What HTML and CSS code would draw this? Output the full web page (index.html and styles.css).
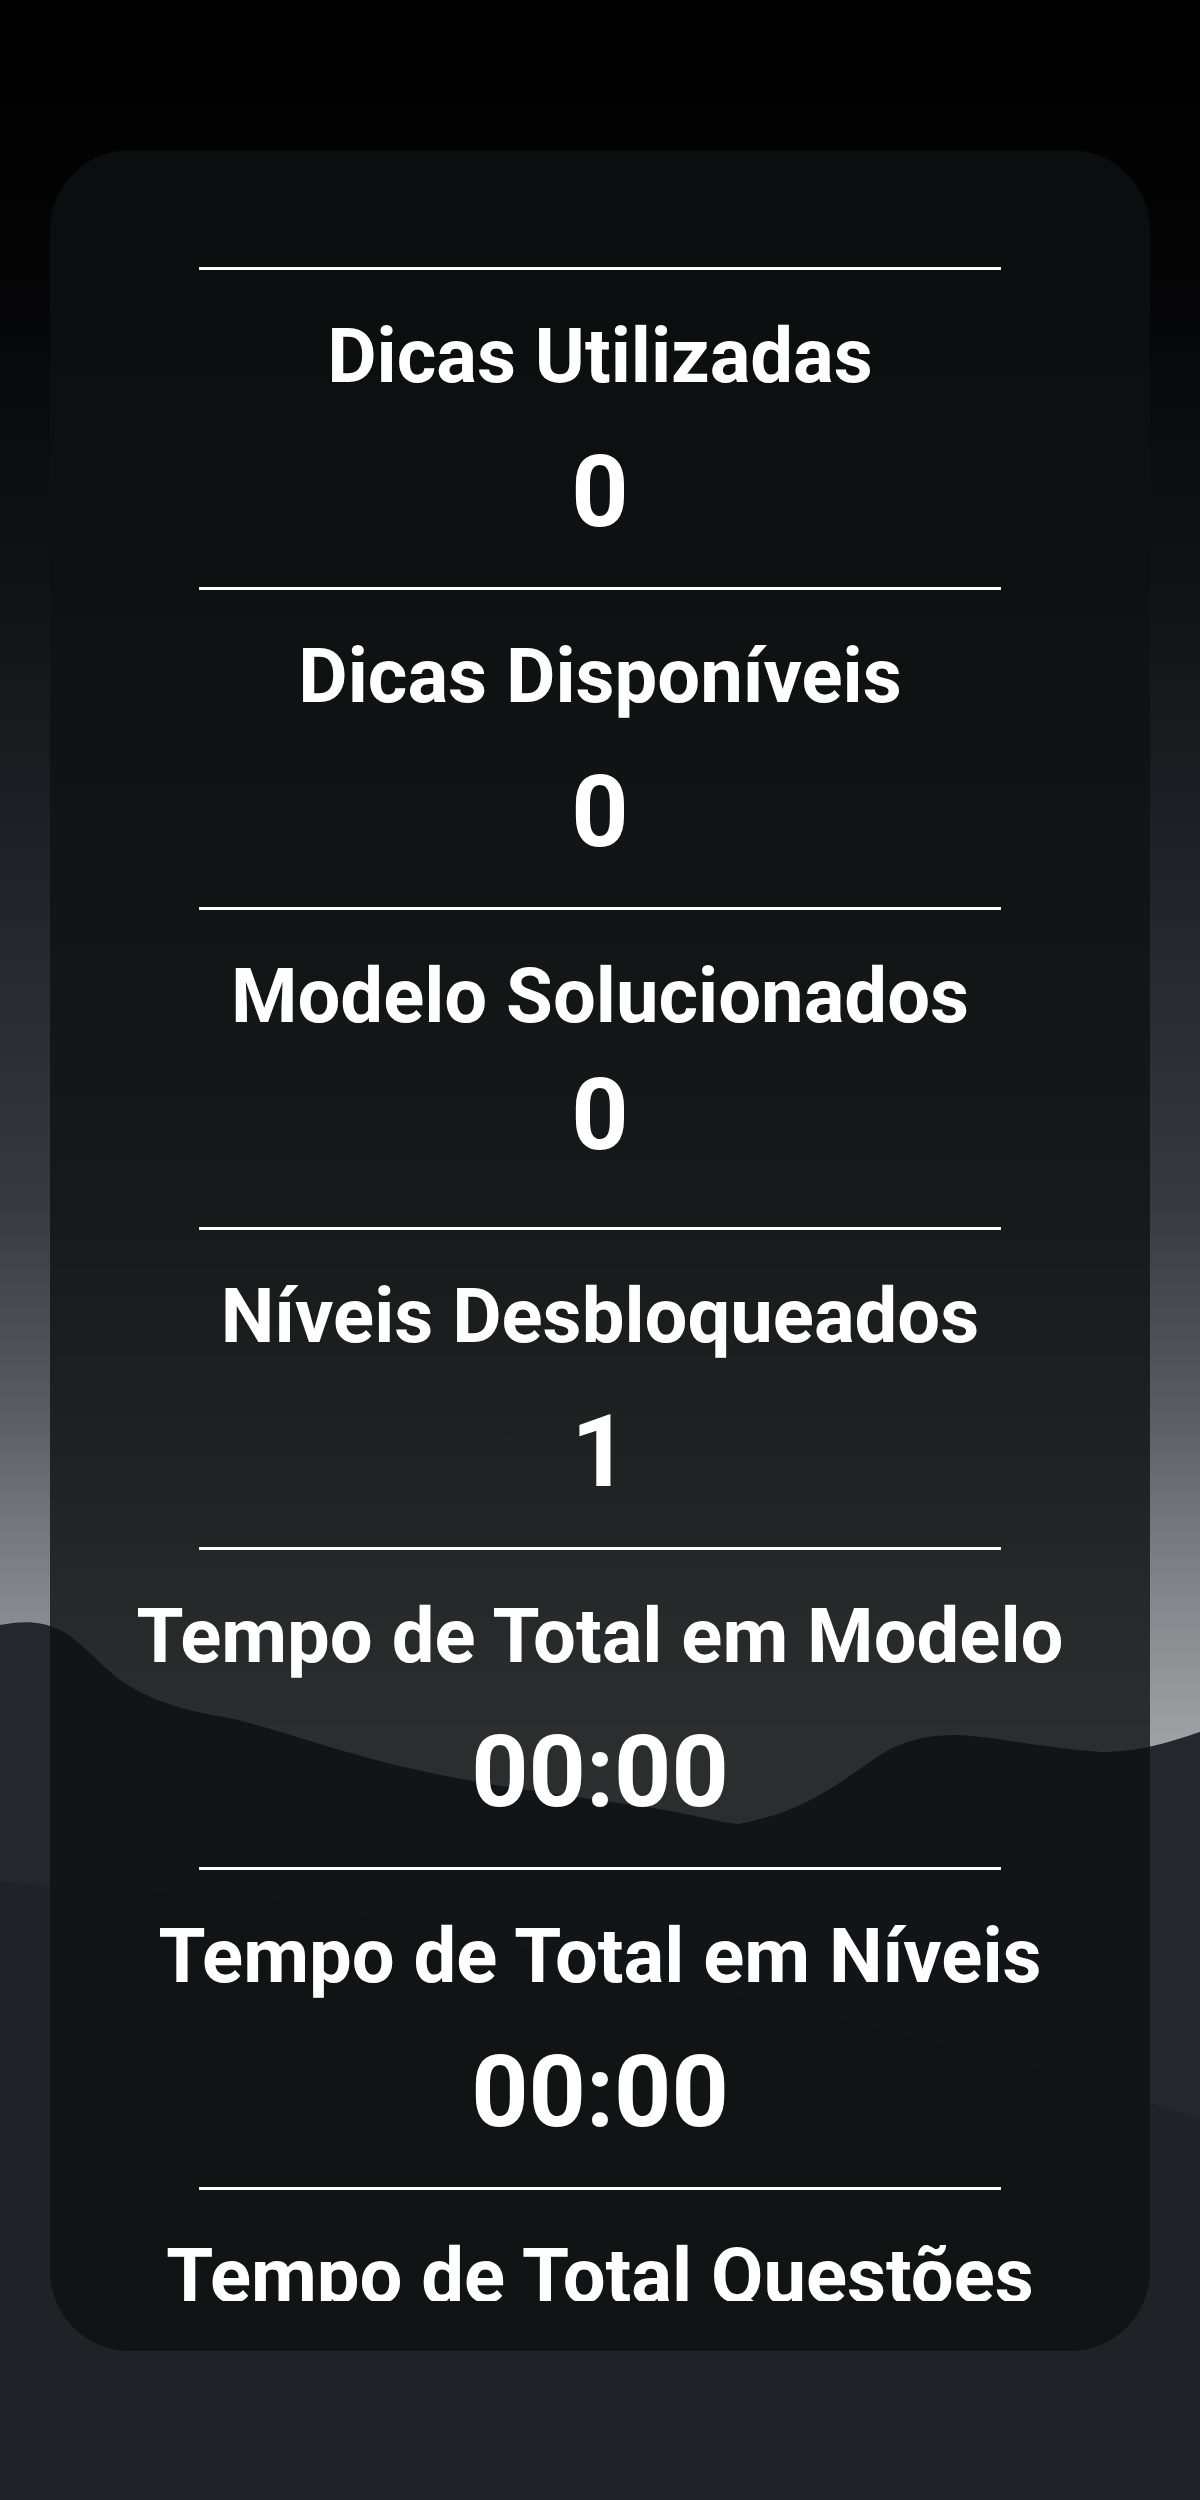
FILE: index.html
```html
<!DOCTYPE html>
<html lang="pt-BR">
<head>
    <meta charset="UTF-8">
    <meta name="viewport" content="width=device-width, initial-scale=1.0">
    <title>Estatísticas</title>
    <link rel="stylesheet" href="styles.css">
</head>
<body>
    <!-- paisagem de fundo -->
    <svg class="backdrop" viewBox="0 0 1200 2500" preserveAspectRatio="none" aria-hidden="true">
        <defs>
            <linearGradient id="sky" x1="0" y1="0" x2="0" y2="1">
                <stop offset="0" stop-color="#000000"/>
                <stop offset="0.1" stop-color="#040405"/>
                <stop offset="0.24" stop-color="#111316"/>
                <stop offset="0.32" stop-color="#1c1e23"/>
                <stop offset="0.4" stop-color="#282b30"/>
                <stop offset="0.48" stop-color="#36393e"/>
                <stop offset="0.56" stop-color="#575b5f"/>
                <stop offset="0.64" stop-color="#84878b"/>
                <stop offset="0.7" stop-color="#a0a2a5"/>
                <stop offset="1" stop-color="#a0a2a5"/>
            </linearGradient>
        </defs>
        <rect x="0" y="0" width="1200" height="2500" fill="url(#sky)"/>
        <path fill="#24272e" d="M0 1625 C20 1621 40 1620 60 1630 C80 1640 95 1660 120 1680 C150 1700 180 1710 230 1718 C280 1730 320 1746 400 1766 C480 1785 560 1795 640 1806 C690 1813 715 1822 738 1824 C752 1822 762 1818 775 1815 C820 1800 850 1775 880 1755 C905 1740 925 1735 960 1735 C1000 1738 1050 1748 1100 1752 C1140 1752 1170 1742 1200 1732 L1200 2500 L0 2500 Z"/>
        <path fill="#1f2227" d="M0 1882 C80 1888 160 1894 280 1902 C500 1940 800 2010 1000 2060 C1100 2085 1160 2105 1200 2120 L1200 2500 L0 2500 Z"/>
    </svg>

    <main class="page">
        <section class="stats-card">
            <div class="stats-scroll">
                <ul class="stats-list">
                    <li class="stat">
                        <div class="divider"></div>
                        <h2 class="stat-title">Dicas Utilizadas</h2>
                        <p class="stat-value">0</p>
                    </li>
                    <li class="stat">
                        <div class="divider"></div>
                        <h2 class="stat-title">Dicas Disponíveis</h2>
                        <p class="stat-value">0</p>
                    </li>
                    <li class="stat">
                        <div class="divider"></div>
                        <h2 class="stat-title">Modelo Solucionados</h2>
                        <p class="stat-value tight">0</p>
                    </li>
                    <li class="stat">
                        <div class="divider"></div>
                        <h2 class="stat-title">Níveis Desbloqueados</h2>
                        <p class="stat-value">1</p>
                    </li>
                    <li class="stat">
                        <div class="divider"></div>
                        <h2 class="stat-title">Tempo de Total em Modelo</h2>
                        <p class="stat-value">00:00</p>
                    </li>
                    <li class="stat">
                        <div class="divider"></div>
                        <h2 class="stat-title">Tempo de Total em Níveis</h2>
                        <p class="stat-value">00:00</p>
                    </li>
                    <li class="stat">
                        <div class="divider"></div>
                        <h2 class="stat-title">Tempo de Total Questões</h2>
                        <p class="stat-value">00:00</p>
                    </li>
                </ul>
            </div>
        </section>
    </main>
</body>
</html>
```

FILE: styles.css
```css
html, body {
    margin: 0;
    padding: 0;
}
body {
    position: relative;
    width: 1200px;
    height: 2500px;
    overflow: hidden;
    background-color: #1f2227;
    font-family: Roboto, "Liberation Sans", sans-serif;
    color: #ffffff;
}
.backdrop {
    position: absolute;
    top: 0;
    left: 0;
    width: 1200px;
    height: 2500px;
    z-index: 0;
}
.page {
    position: relative;
    z-index: 1;
    padding: 150px 50px 0 50px;
}
.stats-card {
    height: 2201px;
    box-sizing: border-box;
    padding: 50px 0;
    border-radius: 80px;
    background-color: rgba(14, 17, 18, 0.8);
}
.stats-scroll {
    height: 100%;
    overflow: hidden;
}
.stats-list {
    list-style-type: none;
    margin: 0;
    padding: 67px 0 0 0;
}
.stat {
    display: flex;
    flex-direction: column;
    align-items: center;
    height: 320px;
}
.divider {
    width: 802px;
    height: 3px;
    background-color: #ffffff;
}
.stat-title {
    margin: 48px 0 0 0;
    font-size: 76px;
    line-height: 76px;
    font-weight: 700;
    white-space: nowrap;
}
.stat-value {
    margin: 48px 0 0 0;
    font-size: 100px;
    line-height: 100px;
    font-weight: 700;
}
.stat-value.tight {
    margin-top: 31px;
}
```
